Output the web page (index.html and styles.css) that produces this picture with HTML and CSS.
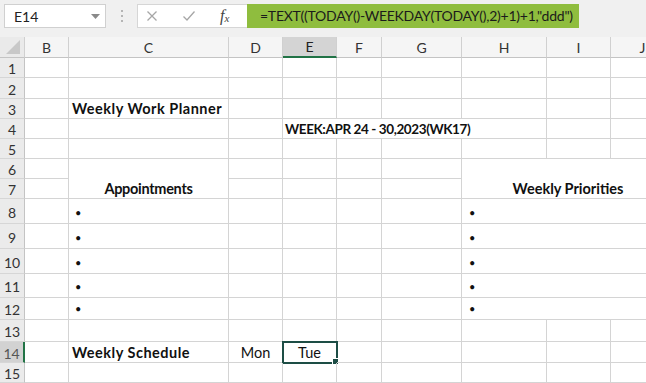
FILE: index.html
```html
<!DOCTYPE html>
<html lang="en">
<head>
  <meta charset="UTF-8">
  <title>Weekly Work Planner</title>
  <link rel="stylesheet" href="styles.css">
</head>
<body>
  <div class="excel">
    <div class="formula-bar">
      <div class="name-box">
        <span>E14</span>
        <svg class="caret" width="9" height="5" viewBox="0 0 9 5"><path d="M0 0h9L4.5 5z" fill="#8a8a8a"/></svg>
      </div>
      <div class="grip"><i></i><i></i><i></i></div>
      <div class="fx-box">
        <svg class="cancel" width="12" height="12" viewBox="0 0 12 12"><path d="M1.5 1.5l9 9M10.5 1.5l-9 9" stroke="#a6a6a6" stroke-width="1.3" fill="none"/></svg>
        <svg class="enter" width="14" height="12" viewBox="0 0 14 12"><path d="M1.5 6.5l3.5 3.5 7.5-8.5" stroke="#a6a6a6" stroke-width="1.3" fill="none"/></svg>
        <span class="fx">f<sub>x</sub></span>
      </div>
      <div class="formula">=TEXT((TODAY()-WEEKDAY(TODAY(),2)+1)+1,"ddd")</div>
    </div>

    <div class="sheet">
      <!-- column headers -->
      <div class="corner"><svg width="14" height="14" viewBox="0 0 14 14"><path d="M14 0v14H0z" fill="#c8c8c8"/></svg></div>
      <div class="col-head">B</div>
      <div class="col-head">C</div>
      <div class="col-head">D</div>
      <div class="col-head active">E</div>
      <div class="col-head">F</div>
      <div class="col-head">G</div>
      <div class="col-head">H</div>
      <div class="col-head">I</div>
      <div class="col-head">J</div>

      <!-- 1 -->
      <div class="row-head">1</div>
      <div class="cell"></div><div class="cell"></div><div class="cell"></div><div class="cell"></div><div class="cell"></div><div class="cell"></div><div class="cell"></div><div class="cell"></div><div class="cell"></div>
      <!-- 2 -->
      <div class="row-head">2</div>
      <div class="cell"></div><div class="cell"></div><div class="cell"></div><div class="cell"></div><div class="cell"></div><div class="cell"></div><div class="cell"></div><div class="cell"></div><div class="cell"></div>
      <!-- 3 -->
      <div class="row-head">3</div>
      <div class="cell"></div>
      <div class="cell bold spaced">Weekly Work Planner</div>
      <div class="cell"></div><div class="cell"></div><div class="cell"></div><div class="cell"></div><div class="cell"></div><div class="cell"></div><div class="cell"></div>
      <!-- 4 -->
      <div class="row-head">4</div>
      <div class="cell"></div><div class="cell"></div><div class="cell"></div>
      <div class="cell bold week">WEEK:APR 24 - 30,2023(WK17)</div>
      <div class="cell"></div><div class="cell"></div>
      <!-- 5 -->
      <div class="row-head">5</div>
      <div class="cell"></div><div class="cell"></div><div class="cell"></div><div class="cell"></div><div class="cell"></div><div class="cell"></div><div class="cell"></div><div class="cell"></div><div class="cell"></div>
      <!-- 6 / 7 -->
      <div class="row-head">6</div>
      <div class="cell"></div>
      <div class="cell bold center tall tight">Appointments</div>
      <div class="cell"></div><div class="cell"></div><div class="cell"></div><div class="cell"></div>
      <div class="cell bold center tall wide">Weekly Priorities</div>
      <div class="row-head">7</div>
      <div class="cell"></div><div class="cell"></div><div class="cell"></div><div class="cell"></div><div class="cell"></div>
      <!-- 8 - 12 -->
      <div class="row-head">8</div>
      <div class="cell"></div><div class="cell bullet">•</div><div class="cell"></div><div class="cell"></div><div class="cell"></div><div class="cell"></div><div class="cell bullet wide">•</div>
      <div class="row-head">9</div>
      <div class="cell"></div><div class="cell bullet">•</div><div class="cell"></div><div class="cell"></div><div class="cell"></div><div class="cell"></div><div class="cell bullet wide">•</div>
      <div class="row-head">10</div>
      <div class="cell"></div><div class="cell bullet">•</div><div class="cell"></div><div class="cell"></div><div class="cell"></div><div class="cell"></div><div class="cell bullet wide">•</div>
      <div class="row-head">11</div>
      <div class="cell"></div><div class="cell bullet">•</div><div class="cell"></div><div class="cell"></div><div class="cell"></div><div class="cell"></div><div class="cell bullet wide">•</div>
      <div class="row-head">12</div>
      <div class="cell"></div><div class="cell bullet">•</div><div class="cell"></div><div class="cell"></div><div class="cell"></div><div class="cell"></div><div class="cell bullet wide">•</div>
      <!-- 13 -->
      <div class="row-head">13</div>
      <div class="cell"></div><div class="cell"></div><div class="cell"></div><div class="cell"></div><div class="cell"></div><div class="cell"></div><div class="cell"></div><div class="cell"></div><div class="cell"></div>
      <!-- 14 -->
      <div class="row-head active">14</div>
      <div class="cell"></div>
      <div class="cell bold spaced">Weekly Schedule</div>
      <div class="cell center">Mon</div>
      <div class="cell center selected">Tue<span class="handle"></span></div>
      <div class="cell"></div><div class="cell"></div><div class="cell"></div><div class="cell"></div><div class="cell"></div>
      <!-- 15 -->
      <div class="row-head">15</div>
      <div class="cell"></div><div class="cell"></div><div class="cell"></div><div class="cell"></div><div class="cell"></div><div class="cell"></div><div class="cell"></div><div class="cell"></div><div class="cell"></div>
    </div>
  </div>
</body>
</html>
```

FILE: styles.css
```css
body {
  margin: 0;
  padding: 0;
  background: #fff;
  font-family: Lato, "Open Sans", sans-serif;
  color: #111;
  overflow: hidden;
}

.excel {
  width: 646px;
  height: 383px;
  overflow: hidden;
}

/* formula bar */
.formula-bar {
  display: flex;
  align-items: flex-start;
  height: 37px;
  padding-top: 4px;
  box-sizing: border-box;
  background: #f0f0f0;
}

.name-box {
  display: flex;
  align-items: center;
  justify-content: space-between;
  width: 102px;
  height: 24px;
  margin-left: 4px;
  padding: 0 5px 0 9px;
  box-sizing: border-box;
  background: #fff;
  border: 1px solid #d0d0d0;
  font-size: 14px;
  color: #222;
}

.grip {
  display: flex;
  flex-direction: column;
  gap: 3px;
  margin: 6px 14px 0 15px;
}

.grip i {
  display: block;
  width: 2px;
  height: 2px;
  background: #b5b5b5;
}

.fx-box {
  display: flex;
  align-items: center;
  width: 110px;
  height: 24px;
  box-sizing: border-box;
  background: #fff;
  border: 1px solid #d6d6d6;
  border-right: none;
  padding-left: 8px;
}

.fx-box .cancel {
  margin-right: 24px;
}

.fx-box .enter {
  margin-right: 24px;
}

.fx {
  font-family: "Liberation Serif", serif;
  font-style: italic;
  font-size: 16px;
  color: #444;
}

.fx sub {
  font-size: 11px;
  vertical-align: -1px;
}

.formula {
  width: 332px;
  height: 24px;
  line-height: 24px;
  box-sizing: border-box;
  padding-left: 13px;
  background: #8fbd3e;
  font-size: 14px;
  color: #1b1b1b;
  white-space: nowrap;
  letter-spacing: -0.25px;
  overflow: hidden;
}

/* sheet grid */
.sheet {
  display: grid;
  grid-template-columns: 25px 44px 160px 54px 54px 45px 80px 85px 64px 64px;
  grid-template-rows: 21px 20px 21px 20px 20px 20px 20px 20px 25px 25px 25px 24px 22px 22px 21px 20px;
  width: 700px;
}

.corner,
.col-head,
.row-head {
  display: flex;
  align-items: center;
  justify-content: center;
  box-sizing: border-box;
  background: #f5f5f5;
  border-right: 1px solid #d0d0d0;
  border-bottom: 1px solid #c4c4c4;
  font-size: 14px;
  color: #333;
}

.corner {
  justify-content: flex-end;
  align-items: flex-end;
  padding: 0 4px 3px 0;
  background: #eaeaea;
}

.row-head {
  background: #ebebeb;
  border-right: 1px solid #c4c4c4;
  border-bottom: 1px solid #d6d6d6;
  padding-top: 2px;
}

.col-head.active {
  background: #d4d4d4;
  border-bottom: 2px solid #217346;
  color: #222;
}

.row-head.active {
  background: #d2d2d2;
  border-right: 2px solid #217346;
  color: #555;
}

.cell {
  display: flex;
  align-items: flex-end;
  box-sizing: border-box;
  padding: 0 3px 1px;
  border-right: 1px solid #d4d4d4;
  border-bottom: 1px solid #d4d4d4;
  font-size: 14.5px;
  white-space: nowrap;
  position: relative;
}

.bold {
  font-weight: 700;
}

.spaced {
  letter-spacing: 0.5px;
}

.tight {
  letter-spacing: -0.3px;
}

.center {
  justify-content: center;
}

.tall {
  grid-row: span 2;
}

.wide {
  grid-column: span 3;
}

.week {
  grid-column: span 4;
  padding-left: 2px;
  font-size: 13.5px;
  letter-spacing: -0.4px;
}

.bullet {
  padding-left: 6px;
  padding-bottom: 4px;
  font-size: 11px;
}

.bullet.wide {
  padding-left: 7px;
}

.selected {
  outline: 2px solid #1d4d45;
  outline-offset: -1px;
}

.handle {
  position: absolute;
  right: -3px;
  bottom: -3px;
  width: 5px;
  height: 5px;
  background: #1d4d45;
  border: 1px solid #fff;
}
```
